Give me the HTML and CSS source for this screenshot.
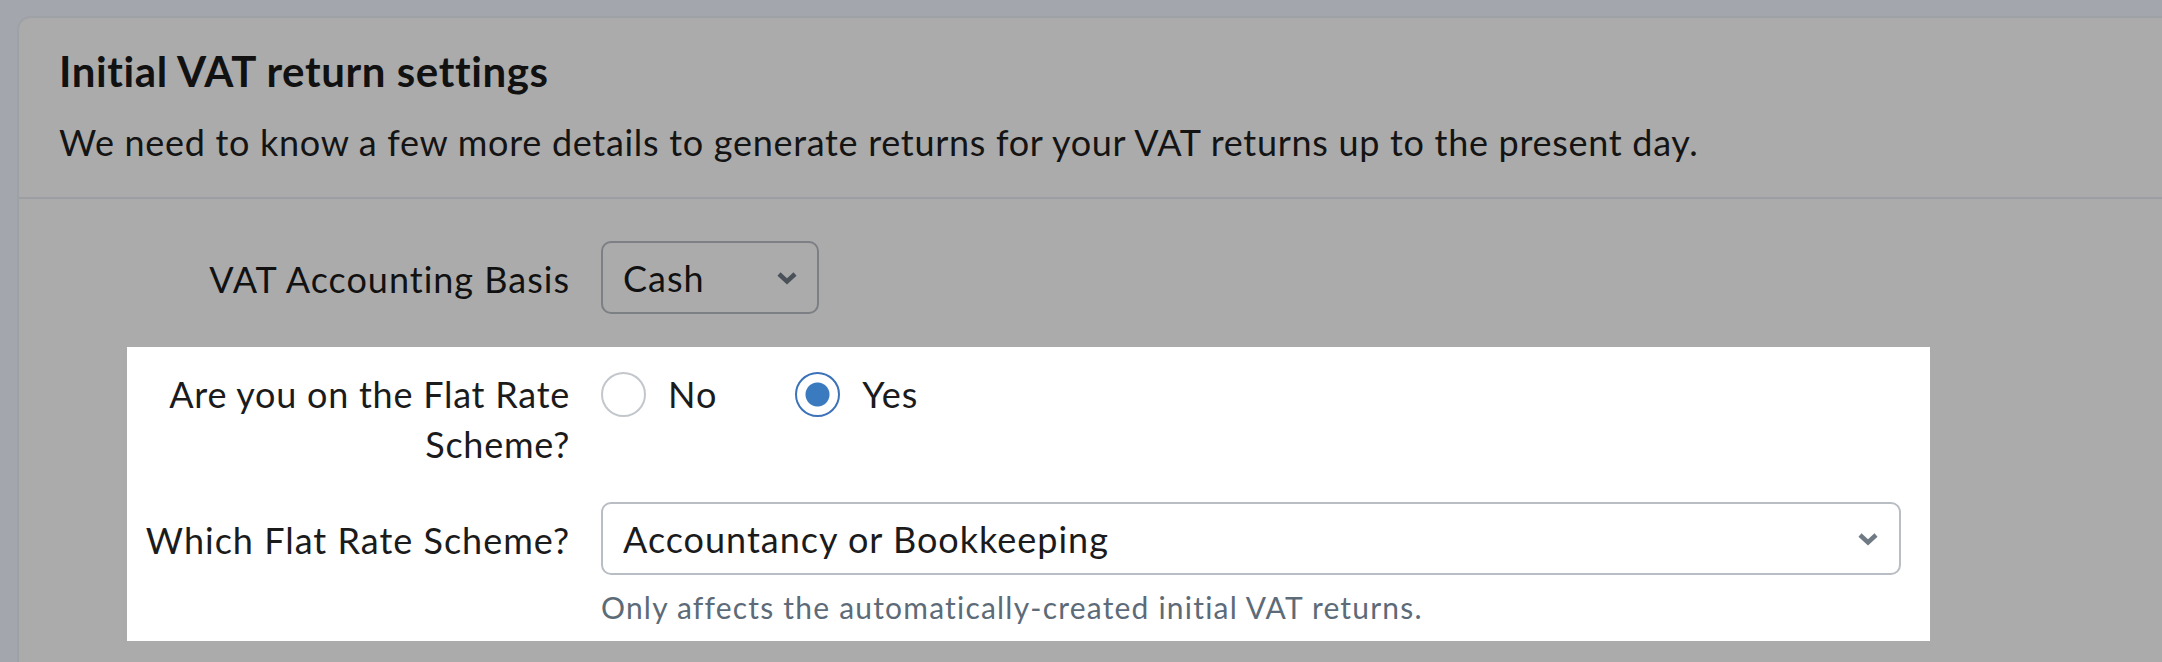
FILE: index.html
```html
<!DOCTYPE html>
<html lang="en">
<head>
  <meta charset="UTF-8">
  <meta name="viewport" content="width=device-width, initial-scale=1.0">
  <title>Initial VAT return settings</title>
  <link rel="stylesheet" href="styles.css">
</head>
<body>
  <div class="card">
    <div class="card-head">
      <h2>Initial VAT return settings</h2>
      <p>We need to know a few more details to generate returns for your VAT returns up to the present day.</p>
    </div>
    <div class="card-body">
      <div class="form-row dimmed">
        <label class="row-label" for="basis">VAT Accounting Basis</label>
        <div class="row-control">
          <div class="select select-small" id="basis">
            <span>Cash</span>
            <svg class="chevron" width="22" height="14" viewBox="0 0 22 14"><polyline points="3,3 11,10.5 19,3" fill="none" stroke="currentColor" stroke-width="4.5" stroke-linejoin="miter"/></svg>
          </div>
        </div>
      </div>

      <div class="highlight">
        <div class="form-row first">
          <div class="row-label">Are you on the Flat Rate Scheme?</div>
          <div class="row-control radios">
            <label class="radio-option"><span class="radio"></span>No</label>
            <label class="radio-option"><span class="radio checked"></span>Yes</label>
          </div>
        </div>
        <div class="form-row">
          <label class="row-label" for="scheme">Which Flat Rate Scheme?</label>
          <div class="row-control">
            <div class="select" id="scheme">
              <span>Accountancy or Bookkeeping</span>
              <svg class="chevron" width="22" height="14" viewBox="0 0 22 14"><polyline points="3,3 11,10.5 19,3" fill="none" stroke="currentColor" stroke-width="4.5" stroke-linejoin="miter"/></svg>
            </div>
            <div class="help">Only affects the automatically-created initial VAT returns.</div>
          </div>
        </div>
      </div>
    </div>
  </div>
</body>
</html>
```

FILE: styles.css
```css
body, html {
  height: 100%;
  margin: 0;
  overflow: hidden;
}
body {
  background: #a3a7ad;
  font-family: Lato, "Liberation Sans", sans-serif;
  color: #111;
}
.card {
  box-sizing: border-box;
  height: 646px;
  margin: 16px 0 0 17px;
  background: #ababab;
  border: 2px solid #9ea1a6;
  border-right: none;
  border-bottom: none;
  border-radius: 14px 0 0 0;
}
.card-head {
  padding: 28px 40px 31px;
  border-bottom: 2px solid #9c9ea3;
}
.card-head h2 {
  margin: 0;
  font-size: 42px;
  line-height: 50px;
  font-weight: 700;
  letter-spacing: 0.6px;
  color: #111;
}
.card-head p {
  margin: 22px 0 0;
  font-size: 36px;
  line-height: 48px;
  letter-spacing: 0.7px;
  color: #141414;
}
.card-body {
  padding-top: 42px;
}
.form-row {
  display: grid;
  grid-template-columns: 443px 1300px;
  column-gap: 31px;
  align-items: start;
}
.dimmed {
  margin-left: 108px;
}
.row-label {
  padding-top: 13px;
  text-align: right;
  font-size: 36px;
  line-height: 50px;
  letter-spacing: 1px;
  color: #1b1b1b;
}
.dimmed .row-label {
  color: #111;
}
.form-row.first .row-label {
  padding-top: 0;
  letter-spacing: 0.75px;
}
.select {
  box-sizing: border-box;
  height: 73px;
  display: flex;
  align-items: center;
  justify-content: space-between;
  padding: 0 20px;
  border: 2px solid #b9bec4;
  border-radius: 10px;
  background: #fff;
  font-size: 36px;
  line-height: 50px;
  letter-spacing: 1px;
  color: #1b1b1b;
}
.select .chevron {
  color: #6f7a84;
}
.select-small {
  width: 218px;
  padding-right: 19px;
  background: #ababab;
  border-color: #7c7f83;
  color: #111;
}
.select-small .chevron {
  color: #4a5158;
}
.highlight {
  margin: 33px 0 0 108px;
  width: 1803px;
  box-sizing: border-box;
  padding: 22px 29px 14px 0;
  background: #fff;
  display: flex;
  flex-direction: column;
  gap: 33px;
}
.radios {
  display: flex;
  gap: 78px;
}
.radio-option {
  display: flex;
  align-items: center;
  gap: 22px;
  font-size: 36px;
  line-height: 50px;
  letter-spacing: 1px;
  color: #1b1b1b;
}
.radio {
  box-sizing: border-box;
  width: 45px;
  height: 45px;
  border: 2.5px solid #c3c7cc;
  border-radius: 50%;
  background: #fff;
}
.radio.checked {
  border: 2.5px solid #3c72b8;
  background: radial-gradient(circle, #3a7bbf 0, #3a7bbf 11.5px, #fff 12.5px);
}
.help {
  margin-top: 12px;
  font-size: 30px;
  line-height: 40px;
  letter-spacing: 1.2px;
  color: #5d6b78;
}
```
